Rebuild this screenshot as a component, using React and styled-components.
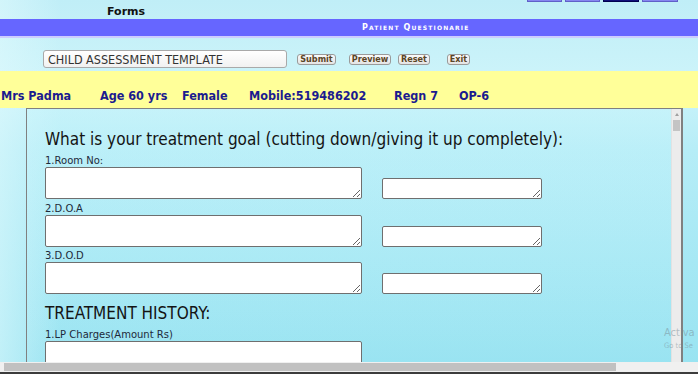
import styled, { createGlobalStyle } from "styled-components";

const GlobalStyle = createGlobalStyle`
  html, body {
    margin: 0;
    padding: 0;
    overflow: hidden;
  }
  body {
    font-family: "DejaVu Sans", Verdana, sans-serif;
  }
`;

const Page = styled.div`
  position: relative;
  width: 698px;
  height: 374px;
  overflow: hidden;
  display: flex;
  flex-direction: column;
  background:
    linear-gradient(90deg, rgba(225, 250, 253, 0.55) 0px, rgba(225, 250, 253, 0) 60px),
    linear-gradient(180deg, #c0eef7 0%, #cdf4fa 22%, #b6edf7 40%, #a6e8f4 70%, #98e3f1 100%);
`;

const TopBar = styled.div`
  height: 19px;
  display: flex;
  align-items: flex-start;
  padding-left: 107px;
`;

const FormsTitle = styled.span`
  font-family: "DejaVu Sans", sans-serif;
  font-weight: bold;
  font-size: 11px;
  line-height: 13px;
  margin-top: 5px;
  color: #111;
`;

const MiniTabs = styled.div`
  display: flex;
  gap: 3px;
  margin-left: auto;
  margin-right: 20px;
`;

const MiniTab = styled.div`
  width: ${(p) => p.w}px;
  height: 1px;
  background: ${(p) => (p.dark ? "#10107a" : "#8686f0")};
  border: 1px solid ${(p) => (p.dark ? "#000050" : "#6060c8")};
  border-top: none;
`;

const TitleBar = styled.div`
  height: 17px;
  background: #6666ff;
  border-bottom: 2px solid #cdcdff;
  display: flex;
  align-items: center;
  padding-left: 362px;
`;

const TitleText = styled.span`
  font-family: "DejaVu Sans", sans-serif;
  font-weight: bold;
  font-size: 8px;
  font-variant: small-caps;
  letter-spacing: 1.15px;
  color: #fff;
`;

const Toolbar = styled.div`
  height: 33px;
  display: flex;
  align-items: flex-start;
  padding: 12px 0 0 43px;
  box-sizing: border-box;
`;

const TemplateInput = styled.input`
  width: 244px;
  height: 18px;
  box-sizing: border-box;
  border: 1px solid #a9a9a9;
  border-radius: 3px;
  background: linear-gradient(180deg, #ffffff, #f1f1f1);
  padding: 0 4px;
  font-family: "DejaVu Sans", sans-serif;
  font-stretch: condensed;
  font-size: 12.5px;
  color: #333;
  outline: none;
`;

const ToolButton = styled.button`
  margin: 4px 0 0 ${(p) => p.gap}px;
  width: ${(p) => p.w}px;
  height: 11px;
  padding: 0;
  box-sizing: border-box;
  border: 1px solid #9a9a9a;
  border-radius: 3px;
  background: linear-gradient(180deg, #fafafa, #e4e4e4);
  font-family: "DejaVu Sans", sans-serif;
  font-stretch: condensed;
  font-weight: bold;
  font-size: 9px;
  line-height: 9px;
  text-align: center;
  color: #5a4526;
  cursor: pointer;
`;

const PatientBar = styled.div`
  height: 37px;
  background: #ffff99;
  display: flex;
  padding: 17px 0 0 1px;
  box-sizing: border-box;
`;

const Info = styled.span`
  width: ${(p) => (p.w ? `${p.w}px` : "auto")};
  flex-shrink: 0;
  font-family: "DejaVu Sans", sans-serif;
  font-stretch: condensed;
  font-weight: bold;
  font-size: 12.5px;
  line-height: 15px;
  color: #1b1b8f;
  white-space: nowrap;
`;

const Body = styled.div`
  flex: 1;
  min-height: 0;
  display: flex;
  padding-left: 26px;
`;

const Frame = styled.div`
  width: 657px;
  box-sizing: border-box;
  border: 1px solid #808080;
  border-bottom: none;
  border-right-width: 2px;
  display: flex;
  overflow: hidden;
`;

const FrameContent = styled.div`
  flex: 1;
  padding: 20px 0 0 18px;
  background: linear-gradient(180deg, rgba(200, 245, 252, 0.35), rgba(160, 230, 244, 0));
`;

const Heading = styled.div`
  font-family: "DejaVu Sans", sans-serif;
  font-stretch: condensed;
  font-size: 17px;
  line-height: 20px;
  color: #141414;
  margin-top: ${(p) => p.top || 0}px;
`;

const Field = styled.div`
  display: flex;
  flex-direction: column;
  margin-top: ${(p) => p.top}px;
`;

const Label = styled.label`
  font-family: "DejaVu Sans", sans-serif;
  font-size: 10px;
  line-height: 12px;
  color: #1e2a3a;
`;

const FieldRow = styled.div`
  display: flex;
  align-items: flex-end;
  gap: 20px;
`;

const Area = styled.textarea`
  display: block;
  width: ${(p) => (p.small ? 160 : 317)}px;
  height: ${(p) => (p.small ? 21 : 32)}px;
  box-sizing: border-box;
  margin: 0;
  padding: 2px;
  border: 1px solid #6f6f6f;
  border-radius: 2px;
  background: #fff;
  font-family: "DejaVu Sans", sans-serif;
  font-size: 11px;
  outline: none;
`;

const VScroll = styled.div`
  width: 9px;
  flex-shrink: 0;
  background: #ececec;
  border-left: 1px solid #e2e2e2;
  display: flex;
  flex-direction: column;
  align-items: center;
`;

const ArrowUp = styled.div`
  margin-top: 4px;
  width: 0;
  height: 0;
  border-left: 2px solid transparent;
  border-right: 2px solid transparent;
  border-bottom: 3px solid #a0a0a0;
`;

const Thumb = styled.div`
  margin-top: 4px;
  width: 7px;
  height: 11px;
  background: #c4c4c4;
`;

const HScroll = styled.div`
  height: 10px;
  background: #f0f0f0;
  border-bottom: 2px solid #3c3c3c;
  display: flex;
  align-items: center;
`;

const HThumb = styled.div`
  margin-left: 4px;
  width: 612px;
  height: 8px;
  background: #c1c1c1;
`;

const Watermark = styled.div`
  position: absolute;
  left: 664px;
  top: 327px;
  font-family: "DejaVu Sans", sans-serif;
  font-stretch: condensed;
  color: rgba(120, 140, 150, 0.5);
  line-height: 1;
  white-space: nowrap;
`;

const WatermarkBig = styled.div`
  font-size: 11px;
`;

const WatermarkSmall = styled.div`
  font-size: 7.5px;
  margin-top: 4px;
`;

const fields = [
  { label: "1.Room No:", top: 6 },
  { label: "2.D.O.A", top: 3.5 },
  { label: "3.D.O.D", top: 3.5 },
];

const App = () => {
  return (
    <Page>
      <GlobalStyle />
      <TopBar>
        <FormsTitle>Forms</FormsTitle>
        <MiniTabs>
          <MiniTab w={33} />
          <MiniTab w={33} />
          <MiniTab w={34} dark />
          <MiniTab w={34} />
        </MiniTabs>
      </TopBar>
      <TitleBar>
        <TitleText>Patient Questionarie</TitleText>
      </TitleBar>
      <Toolbar>
        <TemplateInput defaultValue="CHILD ASSESSMENT TEMPLATE" />
        <ToolButton gap={10} w={39}>Submit</ToolButton>
        <ToolButton gap={13} w={42}>Preview</ToolButton>
        <ToolButton gap={7} w={32}>Reset</ToolButton>
        <ToolButton gap={17} w={23}>Exit</ToolButton>
      </Toolbar>
      <PatientBar>
        <Info w={99}>Mrs Padma</Info>
        <Info w={82}>Age 60 yrs</Info>
        <Info w={67}>Female</Info>
        <Info w={145}>Mobile:519486202</Info>
        <Info w={65}>Regn 7</Info>
        <Info>OP-6</Info>
      </PatientBar>
      <Body>
        <Frame>
          <FrameContent>
            <Heading>
              What is your treatment goal (cutting down/giving it up completely):
            </Heading>
            {fields.map((f) => (
              <Field key={f.label} top={f.top}>
                <Label>{f.label}</Label>
                <FieldRow>
                  <Area />
                  <Area small />
                </FieldRow>
              </Field>
            ))}
            <Heading top={9}>TREATMENT HISTORY:</Heading>
            <Field top={6}>
              <Label>1.LP Charges(Amount Rs)</Label>
              <FieldRow>
                <Area />
              </FieldRow>
            </Field>
          </FrameContent>
          <VScroll>
            <ArrowUp />
            <Thumb />
          </VScroll>
        </Frame>
      </Body>
      <HScroll>
        <HThumb />
      </HScroll>
      <Watermark>
        <WatermarkBig>Activa</WatermarkBig>
        <WatermarkSmall>Go to Se</WatermarkSmall>
      </Watermark>
    </Page>
  );
};

export default App;
